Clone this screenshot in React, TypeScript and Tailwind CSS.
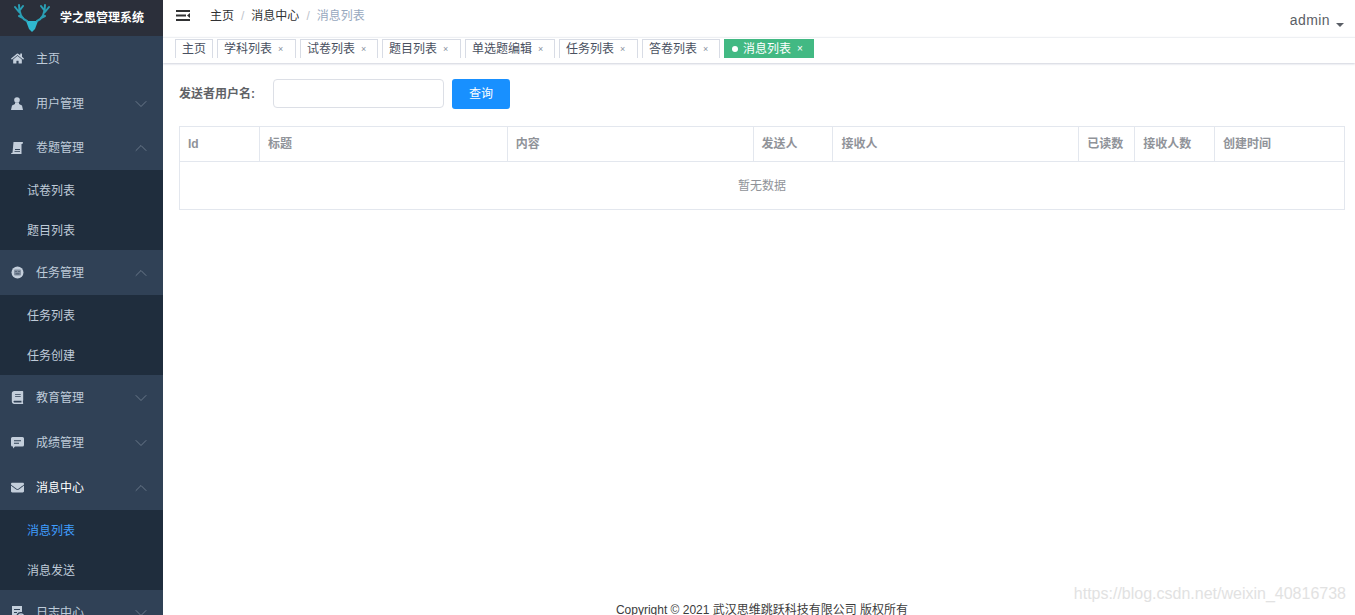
import { ChevronDown, ChevronUp } from 'lucide-react'
import { FaHome, FaBook, FaEnvelope } from 'react-icons/fa'
import type { JSX } from 'react'

const fontStack = "font-['Liberation_Sans','Noto_Sans_CJK_SC',sans-serif]"

function UserIcon() {
  return (
    <svg viewBox="0 0 12 13" className="h-[13px] w-[12px]" fill="currentColor">
      <circle cx="6" cy="3" r="2.800" />
      <path d="M4 5.500h4v1.500l3 1.500 1 4.500H0l1-4.500 3-1.500z" />
    </svg>
  )
}

function PaperIcon() {
  return (
    <svg viewBox="0 0 12 13" className="h-[13px] w-[12px]" fill="currentColor">
      <path d="M2.500 0H12l-.5 2h-1v10H0c0-.8.800-1.200 1.500-1.200z" />
      <path d="M4 7h5v1H4zM3.500 9h5.500v.8H3.500z" fill="#304156" />
    </svg>
  )
}

function FaceIcon() {
  return (
    <svg viewBox="0 0 13 13" className="h-[13px] w-[13px]" fill="currentColor">
      <circle cx="6.500" cy="6.500" r="6" />
      <rect x="3" y="3.500" width="7" height="6" rx="1" fill="#304156" opacity="0.45" />
      <path d="M4.500 5h1v1h-1zM7.500 5h1v1h-1zM4.500 7.500h4v.8h-4z" fill="#304156" />
    </svg>
  )
}

function ChatIcon() {
  return (
    <svg viewBox="0 0 13 13" className="h-[13px] w-[13px]" fill="currentColor">
      <path d="M1.500 1h10A1.500 1.500 0 0 1 13 2.500v6.500a1.500 1.500 0 0 1-1.500 1.500H4L2 12.500v-2h-.5A1.500 1.500 0 0 1 0 9V2.500A1.500 1.500 0 0 1 1.500 1z" />
      <path d="M3 4.200h7v1.100H3zM3 6.700h5v1.100H3z" fill="#304156" />
    </svg>
  )
}

function LogIcon() {
  return (
    <svg viewBox="0 0 14 14" className="h-[14px] w-[14px]" fill="currentColor">
      <path d="M1 0h10v6H9.500a4 4 0 0 0-3.500 6v1H1z" />
      <path d="M3 3h6v1H3zM3 6h3v1H3z" fill="#304156" />
      <circle cx="10" cy="10.500" r="2.500" fill="none" stroke="currentColor" strokeWidth="1.500" />
    </svg>
  )
}

function DeerLogo() {
  return (
    <svg viewBox="0 0 36 28" className="h-7 w-9">
      <path d="M12 17h12l-3 8-3 3-3-3z" fill="#2fb8d0" />
      <g fill="none" stroke="#2a9fb5" strokeWidth="2" strokeLinecap="round">
        <path d="M13 17C8 15 5 11 5 1M5 8L1 3M6 6l3-4M9 14l-4-2" />
        <path d="M23 17c5-2 8-6 8-16M31 8l4-5M30 6l-3-4M27 14l4-2" />
      </g>
    </svg>
  )
}

interface MenuRowProps {
  icon: JSX.Element
  label: string
  arrow?: 'up' | 'down'
  active?: boolean
  className?: string
}

function MenuRow({ icon, label, arrow, active, className = 'h-[45px]' }: MenuRowProps) {
  return (
    <div className={`flex items-center pl-[11px] pr-3 ${className}`}>
      <span className="flex w-[25px] shrink-0 items-center text-[#c3cedb]">{icon}</span>
      <span className={`flex-1 text-xs ${active ? 'text-white' : 'text-[#bfcbd9]'}`}>{label}</span>
      {arrow === 'down' && <ChevronDown size={20} strokeWidth={0.8} className="text-[#8592a3]" />}
      {arrow === 'up' && <ChevronUp size={20} strokeWidth={0.8} className="text-[#8592a3]" />}
    </div>
  )
}

function SubRow({ label, active }: { label: string; active?: boolean }) {
  return (
    <div className={`flex h-10 items-center bg-[#1f2d3d] pl-[27px] pt-[2px] text-xs ${active ? 'text-[#409eff]' : 'text-[#bfcbd9]'}`}>
      {label}
    </div>
  )
}

function Sidebar() {
  return (
    <aside className="flex h-full w-[163px] shrink-0 flex-col overflow-hidden bg-[#304156]">
      <div className="flex h-9 shrink-0 items-center bg-[#2b2f3a] pl-[14px]">
        <DeerLogo />
        <span className="ml-[10px] text-xs font-bold text-white">学之思管理系统</span>
      </div>
      <div className="shrink-0">
        <MenuRow icon={<FaHome size={13} />} label="主页" />
        <MenuRow icon={<UserIcon />} label="用户管理" arrow="down" />
        <MenuRow icon={<PaperIcon />} label="卷题管理" arrow="up" className="h-[44px]" />
        <SubRow label="试卷列表" />
        <SubRow label="题目列表" />
        <MenuRow icon={<FaceIcon />} label="任务管理" arrow="up" />
        <SubRow label="任务列表" />
        <SubRow label="任务创建" />
        <MenuRow icon={<FaBook size={13} />} label="教育管理" arrow="down" />
        <MenuRow icon={<ChatIcon />} label="成绩管理" arrow="down" />
        <MenuRow icon={<FaEnvelope size={13} />} label="消息中心" arrow="up" active />
        <SubRow label="消息列表" active />
        <SubRow label="消息发送" />
        <MenuRow icon={<LogIcon />} label="日志中心" arrow="down" />
      </div>
    </aside>
  )
}

function Navbar() {
  return (
    <header className="flex h-[37px] shrink-0 items-center pb-[6px] pl-[13px] pr-[11px]">
      <svg viewBox="0 0 14 11" className="h-[11px] w-[14px] text-[#303133]" fill="currentColor">
        <path d="M0 0h14v2H0zM0 4.500h10v2H0zM0 9h14v2H0zM14 3v5l-3-2.500z" />
      </svg>
      <nav className="ml-[20px] flex items-center text-xs text-[#303133]">
        <span>主页</span>
        <span className="mx-[7px] text-[#c0c4cc]">/</span>
        <span>消息中心</span>
        <span className="mx-[7px] text-[#c0c4cc]">/</span>
        <span className="text-[#97a8be]">消息列表</span>
      </nav>
      <div className="ml-auto flex items-center pt-[9px] text-sm tracking-[0.4px] text-[#5a5e66]">
        <span>admin</span>
        <span className="ml-[6px] mt-[9px] h-0 w-0 border-x-[4px] border-t-[4px] border-x-transparent border-t-[#5a5e66]" />
      </div>
    </header>
  )
}

const tags = [
  { label: '学科列表', width: 'w-[79px]' },
  { label: '试卷列表', width: 'w-[78px]' },
  { label: '题目列表', width: 'w-[79px]' },
  { label: '单选题编辑', width: 'w-[90px]' },
  { label: '任务列表', width: 'w-[79px]' },
  { label: '答卷列表', width: 'w-[78px]' },
]

function TagsBar() {
  return (
    <div className="flex h-[26px] shrink-0 gap-1 border-t border-[#eef0f3] pl-3 pt-[1px] shadow-[0_1px_2px_0_rgba(60,70,110,0.25)]">
      <div className="flex h-[19px] w-[38px] items-center justify-center border-x border-t border-[#d8dce5] text-xs text-[#495060]">
        主页
      </div>
      {tags.map((tag) => (
        <div
          key={tag.label}
          className={`flex h-[19px] items-center border-x border-t border-[#d8dce5] pl-[6px] text-xs text-[#495060] ${tag.width}`}
        >
          <span>{tag.label}</span>
          <span className="ml-[6px] text-[9px] text-[#8a92a0]">×</span>
        </div>
      ))}
      <div className="flex h-[19px] w-[90px] items-center bg-[#42b983] pl-2 text-xs text-white">
        <span className="h-[6px] w-[6px] rounded-full bg-white" />
        <span className="ml-[5px]">消息列表</span>
        <span className="ml-[6px] text-[10px]">×</span>
      </div>
    </div>
  )
}

const columns = [
  { label: 'Id', width: 'w-[80px]' },
  { label: '标题', width: 'w-[248px]' },
  { label: '内容', width: 'w-[246px]' },
  { label: '发送人', width: 'w-[80px]' },
  { label: '接收人', width: 'w-[246px]' },
  { label: '已读数', width: 'w-[56px]' },
  { label: '接收人数', width: 'w-[80px]' },
  { label: '创建时间', width: 'w-[129px]' },
]

function MessageTable() {
  return (
    <div className="ml-4 mr-[10px] mt-[17px] border border-[#e3e7ee]">
      <div className="flex h-[35px] border-b border-[#e3e7ee]">
        {columns.map((col, i) => (
          <div
            key={col.label}
            className={`flex items-center pl-2 text-xs font-bold text-[#909399] ${col.width} ${i < columns.length - 1 ? 'border-r border-[#e3e7ee]' : ''}`}
          >
            {col.label}
          </div>
        ))}
      </div>
      <div className="flex h-[47px] items-center justify-center text-xs text-[#909399]">暂无数据</div>
    </div>
  )
}

export default function App() {
  return (
    <div className={`flex h-[615px] w-[1355px] overflow-hidden bg-white ${fontStack}`}>
      <Sidebar />
      <main className="relative flex min-w-0 flex-1 flex-col">
        <Navbar />
        <TagsBar />
        <div className="mt-4 flex items-start pl-4">
          <label className="w-[94px] pt-[7px] text-xs font-bold text-[#606266]">发送者用户名:</label>
          <input className="h-[29px] w-[171px] rounded border border-[#dcdfe6] bg-white outline-none" />
          <button className="ml-2 h-[30px] w-[58px] rounded-[3px] bg-[#1890ff] text-xs text-white">查询</button>
        </div>
        <MessageTable />
        <footer className="-mb-[3px] mt-auto pl-[6px] text-center text-xs text-[#3c3c3c]">
          Copyright © 2021 武汉思维跳跃科技有限公司 版权所有
        </footer>
        <span className="absolute bottom-[9px] right-[9px] text-base text-[#e2e2e2]">
          https://blog.csdn.net/weixin_40816738
        </span>
      </main>
    </div>
  )
}
